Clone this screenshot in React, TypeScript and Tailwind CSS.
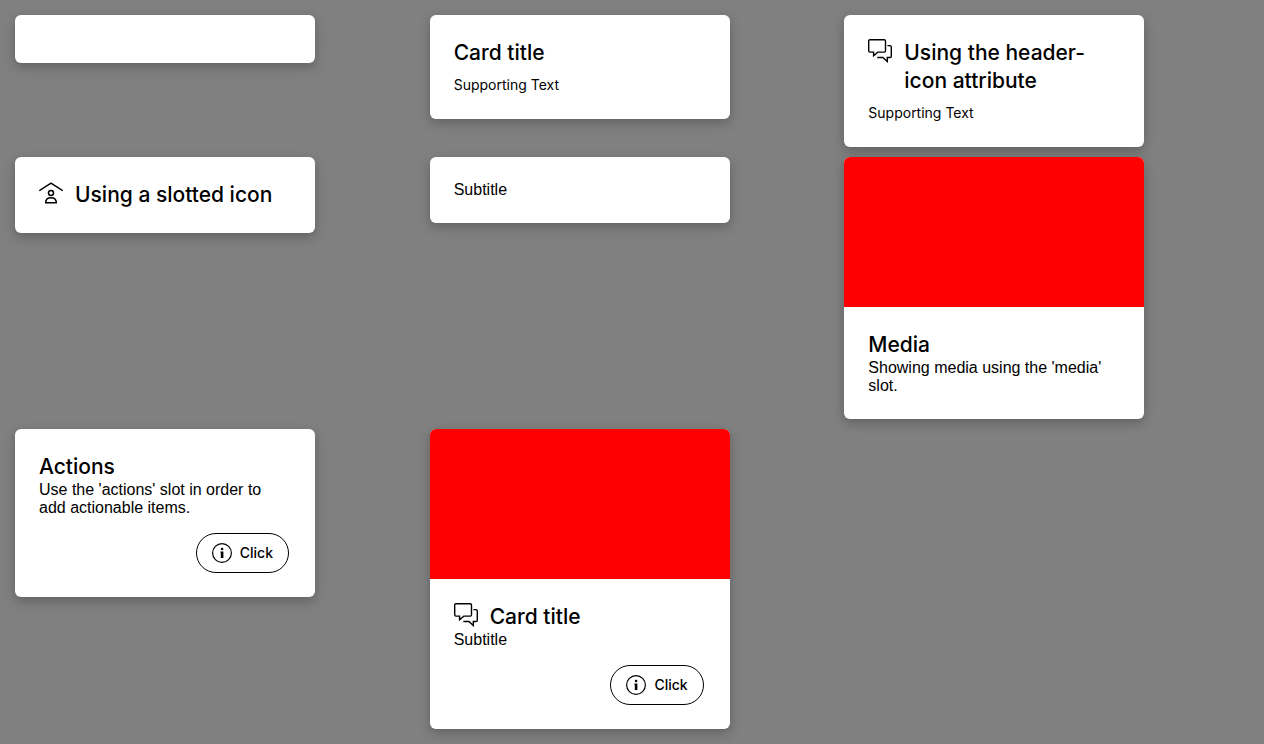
import type { ReactNode } from "react";

function ChatIcon() {
  return (
    <svg className="size-6 shrink-0" viewBox="0 0 24 24" fill="none" stroke="currentColor" strokeWidth="1.4" aria-hidden="true">
      <path d="M2 .7h14.2a1.3 1.3 0 0 1 1.3 1.3v9.8a1.3 1.3 0 0 1-1.3 1.3H9.8L5.6 16.8v-3.7H2a1.3 1.3 0 0 1-1.3-1.3V2A1.3 1.3 0 0 1 2 .7Z" />
      <path d="M19.4 6.6H22a1.3 1.3 0 0 1 1.3 1.3v9.3a1.3 1.3 0 0 1-1.3 1.3h-2.7v4l-4.4-4H9.3" />
    </svg>
  );
}

function ShelterIcon() {
  return (
    <svg className="size-6 shrink-0" viewBox="0 0 24 24" fill="none" stroke="currentColor" strokeWidth="1.5" aria-hidden="true">
      <path d="M.3 9.6 12 2.2l11.7 7.4" />
      <circle cx="12" cy="12" r="2.5" />
      <path d="M6.7 21.8c0-3.2 2.2-5 5.3-5s5.3 1.8 5.3 5Z" />
    </svg>
  );
}

function InfoIcon() {
  return (
    <svg className="size-5 shrink-0" viewBox="0 0 20 20" aria-hidden="true">
      <circle cx="10" cy="10" r="9.4" fill="none" stroke="currentColor" strokeWidth="1.2" />
      <circle cx="10.1" cy="6" r="1.3" fill="currentColor" />
      <path d="M8.4 8.5h3v6.5H8.8V9.7h-.4z" fill="currentColor" />
    </svg>
  );
}

type CardProps = {
  title?: string;
  icon?: ReactNode;
  supporting?: string;
  media?: boolean;
  action?: string;
  children?: ReactNode;
};

function Card({ title, icon, supporting, media, action, children }: CardProps) {
  return (
    <article className="w-full max-w-[300px] overflow-hidden rounded-md bg-white shadow-[0_4px_12px_rgba(0,0,0,0.25)]">
      {media && <div className="h-[150px] bg-[#ff0000]" />}
      <div className="p-6">
        {title && (
          <header className="flex gap-3">
            {icon}
            <h2 className="font-['Inter',sans-serif] text-[21px] leading-7 font-medium">{title}</h2>
          </header>
        )}
        {supporting && (
          <p className="mt-2 font-['Inter',sans-serif] text-sm leading-5">{supporting}</p>
        )}
        {children}
        {action && (
          <div className="mt-4 flex justify-end pr-0.5">
            <button
              type="button"
              className="flex h-10 items-center gap-2 rounded-full border border-black px-[15px] font-['Inter',sans-serif] text-sm leading-5 font-medium"
            >
              <InfoIcon />
              {action}
            </button>
          </div>
        )}
      </div>
    </article>
  );
}

export default function App() {
  return (
    <main className="grid min-h-screen grid-cols-3 content-start items-start gap-2.5 bg-[#808080] p-[15px] font-['Liberation_Sans',Arial,sans-serif] text-base leading-[18px] text-black">
      <Card />
      <Card title="Card title" supporting="Supporting Text" />
      <Card title="Using the header-icon attribute" icon={<ChatIcon />} supporting="Supporting Text" />
      <Card title="Using a slotted icon" icon={<ShelterIcon />} />
      <Card>
        <p>Subtitle</p>
      </Card>
      <Card title="Media" media>
        <p>Showing media using the 'media' slot.</p>
      </Card>
      <Card title="Actions" action="Click">
        <p>Use the 'actions' slot in order to add actionable items.</p>
      </Card>
      <Card title="Card title" icon={<ChatIcon />} media action="Click">
        <p>Subtitle</p>
      </Card>
    </main>
  );
}
